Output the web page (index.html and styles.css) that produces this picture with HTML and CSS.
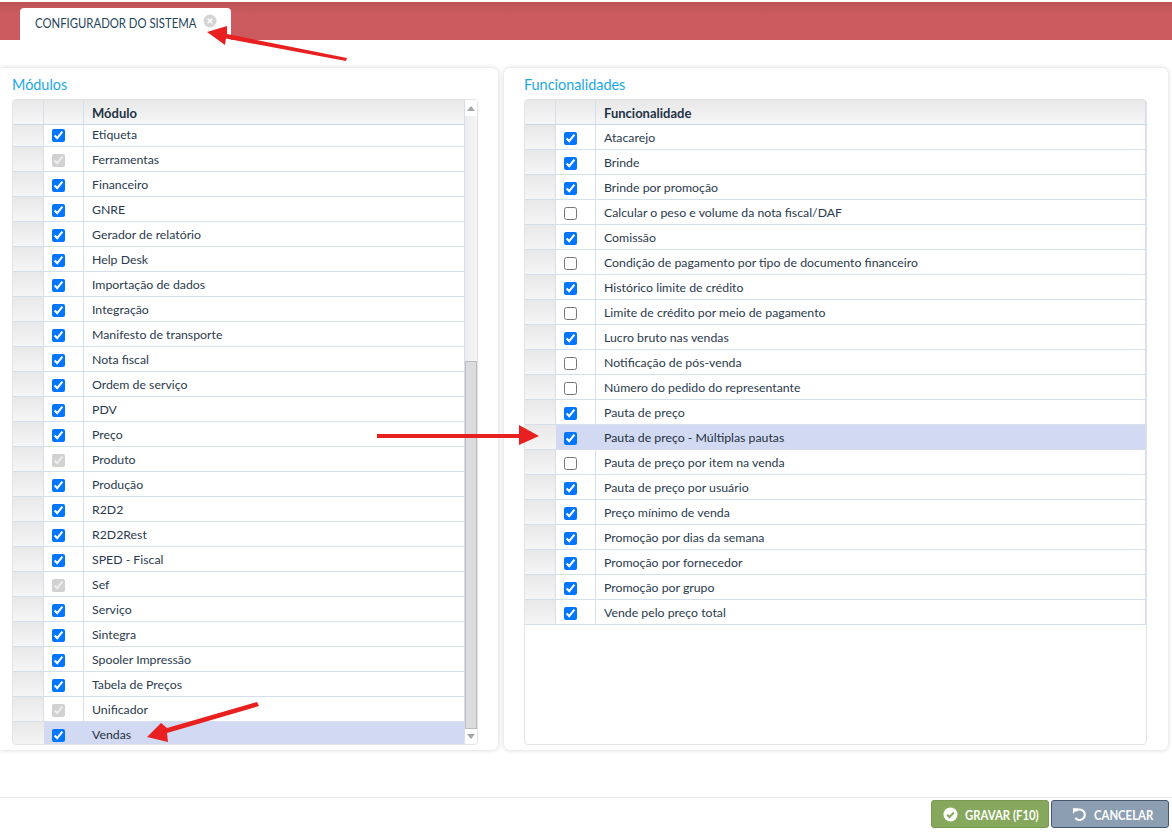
FILE: index.html
```html
<!DOCTYPE html>
<html lang="pt-BR">
<head>
<meta charset="utf-8">
<title>Configurador do sistema</title>
<link rel="stylesheet" href="styles.css">
</head>
<body>
<header class="topbar">
  <div class="tab"><span class="tab-title"><span class="narrow">CONFIGURADOR DO SISTEMA</span></span>
    <svg class="tab-close" viewBox="0 0 14 14" width="14" height="14"><circle cx="7" cy="7" r="6.500" fill="#d4d4d4"/><path d="M4.800 4.800l4.400 4.400M9.200 4.800l-4.400 4.400" stroke="#fff" stroke-width="1.600"/></svg>
  </div>
</header>
<main class="content">
  <section class="panel panel-left">
    <h2 class="panel-title">Módulos</h2>
    <div class="grid">
      <div class="grid-main">
        <div class="row head"><div class="c0"></div><div class="c1"></div><div class="c2">Módulo</div></div>
        <div class="grid-body">
        <div class="grid-rows">
        <div class="row"><div class="c0"></div><div class="c1"><input class="cb" type="checkbox" checked></div><div class="c2">Etiqueta</div></div>
        <div class="row"><div class="c0"></div><div class="c1"><input class="cb" type="checkbox" checked disabled></div><div class="c2">Ferramentas</div></div>
        <div class="row"><div class="c0"></div><div class="c1"><input class="cb" type="checkbox" checked></div><div class="c2">Financeiro</div></div>
        <div class="row"><div class="c0"></div><div class="c1"><input class="cb" type="checkbox" checked></div><div class="c2">GNRE</div></div>
        <div class="row"><div class="c0"></div><div class="c1"><input class="cb" type="checkbox" checked></div><div class="c2">Gerador de relatório</div></div>
        <div class="row"><div class="c0"></div><div class="c1"><input class="cb" type="checkbox" checked></div><div class="c2">Help Desk</div></div>
        <div class="row"><div class="c0"></div><div class="c1"><input class="cb" type="checkbox" checked></div><div class="c2">Importação de dados</div></div>
        <div class="row"><div class="c0"></div><div class="c1"><input class="cb" type="checkbox" checked></div><div class="c2">Integração</div></div>
        <div class="row"><div class="c0"></div><div class="c1"><input class="cb" type="checkbox" checked></div><div class="c2">Manifesto de transporte</div></div>
        <div class="row"><div class="c0"></div><div class="c1"><input class="cb" type="checkbox" checked></div><div class="c2">Nota fiscal</div></div>
        <div class="row"><div class="c0"></div><div class="c1"><input class="cb" type="checkbox" checked></div><div class="c2">Ordem de serviço</div></div>
        <div class="row"><div class="c0"></div><div class="c1"><input class="cb" type="checkbox" checked></div><div class="c2">PDV</div></div>
        <div class="row"><div class="c0"></div><div class="c1"><input class="cb" type="checkbox" checked></div><div class="c2">Preço</div></div>
        <div class="row"><div class="c0"></div><div class="c1"><input class="cb" type="checkbox" checked disabled></div><div class="c2">Produto</div></div>
        <div class="row"><div class="c0"></div><div class="c1"><input class="cb" type="checkbox" checked></div><div class="c2">Produção</div></div>
        <div class="row"><div class="c0"></div><div class="c1"><input class="cb" type="checkbox" checked></div><div class="c2">R2D2</div></div>
        <div class="row"><div class="c0"></div><div class="c1"><input class="cb" type="checkbox" checked></div><div class="c2">R2D2Rest</div></div>
        <div class="row"><div class="c0"></div><div class="c1"><input class="cb" type="checkbox" checked></div><div class="c2">SPED - Fiscal</div></div>
        <div class="row"><div class="c0"></div><div class="c1"><input class="cb" type="checkbox" checked disabled></div><div class="c2">Sef</div></div>
        <div class="row"><div class="c0"></div><div class="c1"><input class="cb" type="checkbox" checked></div><div class="c2">Serviço</div></div>
        <div class="row"><div class="c0"></div><div class="c1"><input class="cb" type="checkbox" checked></div><div class="c2">Sintegra</div></div>
        <div class="row"><div class="c0"></div><div class="c1"><input class="cb" type="checkbox" checked></div><div class="c2">Spooler Impressão</div></div>
        <div class="row"><div class="c0"></div><div class="c1"><input class="cb" type="checkbox" checked></div><div class="c2">Tabela de Preços</div></div>
        <div class="row"><div class="c0"></div><div class="c1"><input class="cb" type="checkbox" checked disabled></div><div class="c2">Unificador</div></div>
        <div class="row sel"><div class="c0"></div><div class="c1"><input class="cb" type="checkbox" checked></div><div class="c2">Vendas</div></div>
        </div>
        </div>
      </div>
      <div class="scrollbar">
        <div class="sb-btn"><span class="sb-up"></span></div>
        <div class="sb-track"><div class="sb-thumb"></div></div>
        <div class="sb-btn sb-btn-down"><span class="sb-down"></span></div>
      </div>
    </div>
  </section>
  <section class="panel panel-right">
    <h2 class="panel-title">Funcionalidades</h2>
    <div class="grid grid-right">
      <div class="grid-main">
        <div class="row head"><div class="c0"></div><div class="c1"></div><div class="c2">Funcionalidade</div></div>
        <div class="row"><div class="c0"></div><div class="c1"><input class="cb" type="checkbox" checked></div><div class="c2">Atacarejo</div></div>
        <div class="row"><div class="c0"></div><div class="c1"><input class="cb" type="checkbox" checked></div><div class="c2">Brinde</div></div>
        <div class="row"><div class="c0"></div><div class="c1"><input class="cb" type="checkbox" checked></div><div class="c2">Brinde por promoção</div></div>
        <div class="row"><div class="c0"></div><div class="c1"><input class="cb" type="checkbox"></div><div class="c2">Calcular o peso e volume da nota fiscal/DAF</div></div>
        <div class="row"><div class="c0"></div><div class="c1"><input class="cb" type="checkbox" checked></div><div class="c2">Comissão</div></div>
        <div class="row"><div class="c0"></div><div class="c1"><input class="cb" type="checkbox"></div><div class="c2">Condição de pagamento por tipo de documento financeiro</div></div>
        <div class="row"><div class="c0"></div><div class="c1"><input class="cb" type="checkbox" checked></div><div class="c2">Histórico limite de crédito</div></div>
        <div class="row"><div class="c0"></div><div class="c1"><input class="cb" type="checkbox"></div><div class="c2">Limite de crédito por meio de pagamento</div></div>
        <div class="row"><div class="c0"></div><div class="c1"><input class="cb" type="checkbox" checked></div><div class="c2">Lucro bruto nas vendas</div></div>
        <div class="row"><div class="c0"></div><div class="c1"><input class="cb" type="checkbox"></div><div class="c2">Notificação de pós-venda</div></div>
        <div class="row"><div class="c0"></div><div class="c1"><input class="cb" type="checkbox"></div><div class="c2">Número do pedido do representante</div></div>
        <div class="row"><div class="c0"></div><div class="c1"><input class="cb" type="checkbox" checked></div><div class="c2">Pauta de preço</div></div>
        <div class="row sel"><div class="c0"></div><div class="c1"><input class="cb" type="checkbox" checked></div><div class="c2">Pauta de preço - Múltiplas pautas</div></div>
        <div class="row"><div class="c0"></div><div class="c1"><input class="cb" type="checkbox"></div><div class="c2">Pauta de preço por item na venda</div></div>
        <div class="row"><div class="c0"></div><div class="c1"><input class="cb" type="checkbox" checked></div><div class="c2">Pauta de preço por usuário</div></div>
        <div class="row"><div class="c0"></div><div class="c1"><input class="cb" type="checkbox" checked></div><div class="c2">Preço mínimo de venda</div></div>
        <div class="row"><div class="c0"></div><div class="c1"><input class="cb" type="checkbox" checked></div><div class="c2">Promoção por dias da semana</div></div>
        <div class="row"><div class="c0"></div><div class="c1"><input class="cb" type="checkbox" checked></div><div class="c2">Promoção por fornecedor</div></div>
        <div class="row"><div class="c0"></div><div class="c1"><input class="cb" type="checkbox" checked></div><div class="c2">Promoção por grupo</div></div>
        <div class="row"><div class="c0"></div><div class="c1"><input class="cb" type="checkbox" checked></div><div class="c2">Vende pelo preço total</div></div>
      </div>
    </div>
  </section>
</main>
<footer class="footer">
  <button class="btn btn-save">
    <svg class="btn-icon" viewBox="0 0 16 16" width="15" height="15"><circle cx="8" cy="8" r="7.500" fill="#fff"/><path d="M4.400 8.200l2.500 2.500 4.700-4.900" fill="none" stroke="#86a85c" stroke-width="2.200"/></svg>
    <span class="narrow">GRAVAR (F10)</span></button>
  <button class="btn btn-cancel">
    <svg class="btn-icon" viewBox="0 0 16 16" width="15" height="15"><path d="M4.200 4.200A5.600 5.600 0 1 1 3.600 11.600" fill="none" stroke="#fff" stroke-width="2.200"/><path d="M1 1.200h6.200L1 7.200z" fill="#fff"/></svg>
    <span class="narrow">CANCELAR</span></button>
</footer>
<svg class="arrows" viewBox="0 0 1172 834" width="1172" height="834">
  <path d="M347 58L227 34 227 26 207 32 225 45 226 38.500 346 61z" fill="#e82020"/>
  <path d="M377 434h142v-9l20 11-20 9v-7H377z" fill="#e82020"/>
  <path d="M257 702L167 728 161 723 147 737 168 742 167 733 259 706z" fill="#e82020"/>
</svg>
</body>
</html>
```
FILE: styles.css
```css
* { box-sizing: border-box; }
html, body { margin: 0; padding: 0; }
body {
  width: 1172px;
  height: 834px;
  overflow: hidden;
  position: relative;
  background: #fff;
  font-family: "Lato", "Noto Sans", sans-serif;
  font-size: 12.300px;
  color: #2a3a4c;
  display: flex;
  flex-direction: column;
}
.narrow {
  display: block;
  white-space: nowrap;
  transform: scaleX(.81);
  transform-origin: left center;
}
.topbar {
  height: 38px;
  margin-top: 2px;
  padding: 6px 0 0 20px;
  background: linear-gradient(#bd5357 0, #cb5b5e 12px);
  flex: none;
}
.tab {
  width: 211px;
  height: 32px;
  background: #fff;
  border-radius: 4px 4px 0 0;
  display: flex;
  align-items: flex-start;
  padding: 6px 0 0 15px;
}
.tab-title {
  width: 168px;
  flex: none;
  font-size: 14px;
  color: #1d4459;
  line-height: 17px;
}
.tab-close { flex: none; }
.content {
  flex: none;
  height: 682px;
  margin-top: 28px;
  display: flex;
  gap: 6px;
}
.panel {
  background: #fff;
  border-radius: 0 6px 6px 0;
  box-shadow: 0 0 5px rgba(0,0,0,.18);
  padding: 8px 12px 0;
  height: 682px;
  display: flex;
  flex-direction: column;
}
.panel-left { width: 498px; padding-right: 20px; }
.panel-right { width: 664px; border-radius: 6px; padding: 8px 21px 0 20px; }
.panel-title {
  margin: 0 0 5px;
  font-size: 14.400px;
  font-weight: 400;
  line-height: 18px;
  color: #1ba8e8;
}
.grid {
  height: 646px;
  border: 1px solid #e3e3e3;
  border-radius: 4px;
  display: flex;
  overflow: hidden;
}
.grid-main { flex: 1; min-width: 0; display: flex; flex-direction: column; }
.grid-body { flex: 1; min-height: 0; overflow: hidden; }
.grid-rows { margin-top: -3px; }
.row { display: flex; flex: none; height: 25px; border-bottom: 1px solid #d5dfec; }
.row.head { border-bottom: 1px solid #c9d7e6; background: linear-gradient(#e8e8e8, #f6f6f6); }
.row.sel { background: #d2daf3; }
.row.sel .c2 { color: #24303c; }
.grid-right .row { border-right: 1px solid #d3dcf1; }
.c0 {
  width: 31px;
  flex: none;
  background: linear-gradient(#e8e8e8, #f5f5f5);
  border-right: 1px solid #d5dfec;
}
.head .c0 { background: none; }
.c1 {
  width: 40px;
  flex: none;
  border-right: 1px solid #d5dfec;
  display: flex;
  align-items: flex-start;
  padding: 7px 0 0 8px;
}
.row.sel .c1 { border-right-color: transparent; }
.row.sel .c0 { border-right-color: transparent; }
.c2 { flex: 1; padding-left: 8px; line-height: 26px; white-space: nowrap; }
.head .c2 { font-weight: 700; font-size: 13px; color: #1f3244; line-height: 27px; }
.cb { width: 13px; height: 13px; margin: 0; }
.scrollbar {
  width: 13px;
  flex: none;
  display: flex;
  flex-direction: column;
  background: #f0f0f0;
  border-left: 1px solid #d5dfec;
}
.sb-btn { height: 16px; flex: none; background: #fff; display: flex; align-items: center; justify-content: center; }
.sb-btn-down { height: 15px; }
.sb-up { border: 4px solid transparent; border-top: 0; border-bottom: 5px solid #a6a6a6; }
.sb-down { border: 4px solid transparent; border-bottom: 0; border-top: 5px solid #a6a6a6; }
.sb-track { flex: 1; display: flex; flex-direction: column; justify-content: flex-end; background: linear-gradient(90deg, #ececec, #f6f6f6); }
.sb-thumb { height: 368px; background: #dcdcdc; border: 1px solid #bdbdbd; }
.footer {
  flex: none;
  margin-top: 47px;
  height: 37px;
  border-top: 1px solid #e8e8e8;
  display: flex;
  justify-content: flex-end;
  align-items: flex-start;
  gap: 2px;
  padding: 2px 3px 0 0;
}
.btn {
  width: 118px;
  height: 28px;
  border-radius: 3px;
  display: flex;
  align-items: center;
  gap: 7px;
  color: #fff;
  font-family: inherit;
  font-size: 14px;
  font-weight: 700;
}
.btn-icon { flex: none; }
.btn-save { background: #86a85c; border: 1px solid #7a9a52; padding: 0 0 0 11px; }
.btn-cancel { background: #8c9eb2; border: 1px solid #46566b; padding: 0 0 0 20px; }
.arrows { position: absolute; left: 0; top: 0; pointer-events: none; }
```
